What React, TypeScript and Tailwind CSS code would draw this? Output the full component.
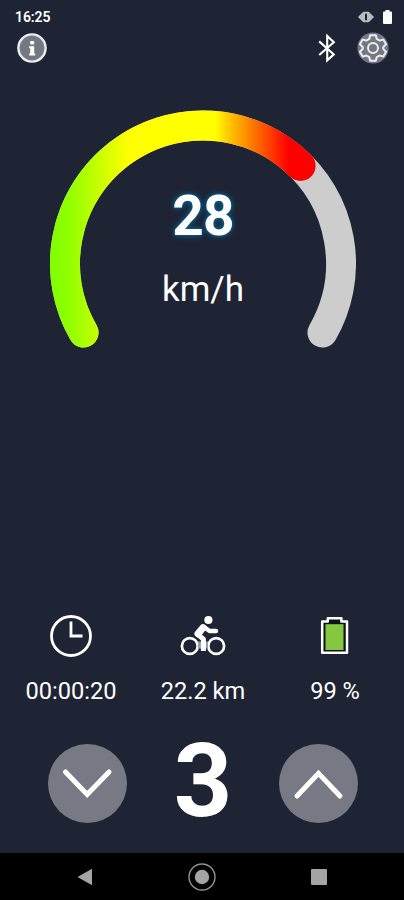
import type { ReactNode } from "react";

interface StatProps {
  icon: ReactNode;
  value: string;
}

function StatusBar() {
  return (
    <div className="flex h-8 items-center justify-between pt-0.5 pr-3 pl-[15px]">
      <span className="text-[14px] leading-none font-semibold tracking-[-0.1px]">16:25</span>
      <div className="flex items-center gap-[9px]">
        <svg width="16" height="12" viewBox="0 0 16 12">
          <path d="M0 6 4 2v8zM16 6l-4-4v8z" fill="#b9bbc1" />
          <rect x="4" y="0.8" width="8" height="10.4" rx="2" fill="#b9bbc1" />
          <rect x="7" y="2.4" width="2" height="7.2" rx="1" fill="#1f2433" />
        </svg>
        <svg width="9" height="14" viewBox="0 0 9 14">
          <path d="M2.5 0h4v1.5H8a1 1 0 0 1 1 1V13a1 1 0 0 1-1 1H1a1 1 0 0 1-1-1V2.5a1 1 0 0 1 1-1h1.5z" fill="#fff" />
        </svg>
      </div>
    </div>
  );
}

function InfoIcon() {
  return (
    <svg width="32" height="32" viewBox="0 0 32 32">
      <circle cx="16" cy="16" r="13.6" fill="#747885" stroke="#ececf1" strokeWidth="2.4" />
      <rect x="14.2" y="9" width="4" height="3.6" rx="0.8" fill="#fff" />
      <path d="M13.2 14.2h5v7.2h1v2h-6v-2h1v-5.200h-1z" fill="#fff" />
    </svg>
  );
}

function BluetoothIcon() {
  return (
    <svg width="20" height="32" viewBox="0 0 20 32" fill="none" stroke="#fff" strokeWidth="2.1">
      <path d="m2.2 9.400 14.600 13-6.600 6V4l6.600 6.200L2.200 23" />
    </svg>
  );
}

function GearIcon() {
  return (
    <svg width="32" height="32" viewBox="0 0 32 32" fill="none" stroke="#ededf0" strokeWidth="2" strokeLinejoin="round">
      <circle cx="16" cy="16" r="15.6" fill="#747884" stroke="none" />
      <path d="M13.200 3.200h5.600l.9 3.700 2.900 1.700 3.700-1.100 2.800 4.800-2.800 2.700v2.100l2.800 2.700-2.800 4.800-3.700-1.100-2.900 1.700-.9 3.600h-5.600l-.9-3.600-2.900-1.700-3.700 1.100-2.800-4.800L5.700 17v-2l-2.800-2.700 2.800-4.800 3.700 1.100 2.900-1.700z" />
      <circle cx="16" cy="16" r="5" />
    </svg>
  );
}

function Gauge() {
  return (
    <div className="relative h-[240px] w-[306px]">
      <svg width="306" height="240" viewBox="0 0 306 240" fill="none" strokeWidth="30" strokeLinecap="round">
        <defs>
          <linearGradient id="speed" gradientUnits="userSpaceOnUse" x1="0" y1="0" x2="306" y2="0">
            <stop offset="0" stopColor="#80ff00" />
            <stop offset="0.06" stopColor="#90ff00" />
            <stop offset="0.26" stopColor="#ffff00" />
            <stop offset="0.54" stopColor="#ffff00" />
            <stop offset="0.58" stopColor="#ffcc00" />
            <stop offset="0.78" stopColor="#ff0000" />
          </linearGradient>
        </defs>
        <path d="M33.500 222.500A138 138 0 1 1 272.500 222.500" stroke="#cdcdcd" />
        <path d="M33.500 222.500A138 138 0 0 1 250.600 55.900" stroke="url(#speed)" />
      </svg>
      <div className="absolute inset-x-0 top-[78px] flex flex-col items-center">
        <span className="text-[55px] leading-[57px] font-bold tracking-[-0.8px] [text-shadow:0_0_4px_#08699c,0_0_7px_#08547f]">28</span>
        <span className="mt-5 text-[35px] leading-[50px]">km/h</span>
      </div>
    </div>
  );
}

function ClockIcon() {
  return (
    <svg width="44" height="44" viewBox="0 0 44 44" fill="none" stroke="#fff" strokeWidth="2.8">
      <circle cx="22" cy="22" r="19.5" />
      <path d="M22 7.500v14.500h11.500" />
    </svg>
  );
}

function BikeIcon() {
  return (
    <svg width="46" height="44" viewBox="0 0 46 44" fill="none" stroke="#fff">
      <circle cx="9.800" cy="32" r="7.900" strokeWidth="2.700" />
      <circle cx="36.200" cy="32" r="7.900" strokeWidth="2.700" />
      <path d="M18 27.500h10v7H18z" fill="#9a9da7" stroke="none" />
      <circle cx="28.400" cy="6" r="4.100" fill="#fff" stroke="none" />
      {/* torso, arms, leg */}
      <g strokeLinejoin="round">
        <path d="m23 13.800-5 6" strokeWidth="7" strokeLinecap="round" />
        <path d="m24 13 5.500 4H36" strokeWidth="4.400" strokeLinecap="round" />
        <path d="m18 20.500 5.400 4.700V37" strokeWidth="5" />
      </g>
    </svg>
  );
}

function BatteryIcon() {
  return (
    <svg width="32" height="44" viewBox="0 0 32 44">
      <path d="M3.200 7.500h5.600V4.300h13.600v3.200H28v31.300H3.200z" fill="#10131e" stroke="#fff" strokeWidth="2.500" strokeLinejoin="round" />
      <path d="M10.500 7.500h10" stroke="#10131e" strokeWidth="3" />
      <rect x="6.500" y="10.200" width="18" height="25.800" fill="#84c83f" />
    </svg>
  );
}

function Stat({ icon, value }: StatProps) {
  return (
    <div className="flex flex-1 flex-col items-center">
      {icon}
      <span className="mt-[19px] text-[23.6px] leading-7 whitespace-nowrap">{value}</span>
    </div>
  );
}

function RoundButton({ label, path }: { label: string; path: string }) {
  return (
    <button aria-label={label} className="size-[79px] rounded-full bg-[#777a85]">
      <svg width="79" height="79" viewBox="0 0 79 79" fill="none" stroke="#fff" strokeWidth="5" strokeLinecap="round">
        <path d={path} />
      </svg>
    </button>
  );
}

function NavBar() {
  return (
    <div className="flex h-[47px] items-center justify-between bg-black pr-[77px] pl-[77px]">
      <svg width="16" height="18" viewBox="0 0 16 18">
        <path d="M.5 9 15 .8v16.400z" fill="#a4a4a4" />
      </svg>
      <svg width="28" height="28" viewBox="0 0 28 28">
        <circle cx="14" cy="14" r="13" fill="none" stroke="#929292" strokeWidth="1.400" />
        <circle cx="14" cy="14" r="7.200" fill="#a4a4a4" />
      </svg>
      <div className="size-4 rounded-[1px] bg-[#a4a4a4]" />
    </div>
  );
}

export default function App() {
  return (
    <div className="flex h-[900px] w-[404px] flex-col bg-[#1f2434] font-['Roboto',sans-serif] text-white">
      <StatusBar />
      <header className="flex h-8 items-center justify-between pr-[15px] pl-[15.5px]">
        <InfoIcon />
        <div className="flex items-center gap-[20px]">
          <BluetoothIcon />
          <GearIcon />
        </div>
      </header>
      <main className="flex flex-1 flex-col">
        <div className="flex justify-center pt-[46px] pl-0.5">
          <Gauge />
        </div>
        <div className="mt-[264px] flex pr-[3px] pl-[5px]">
          <Stat icon={<ClockIcon />} value="00:00:20" />
          <Stat icon={<BikeIcon />} value="22.2 km" />
          <Stat icon={<BatteryIcon />} value="99 %" />
        </div>
        <div className="mt-[24px] flex h-[108px] items-center justify-between pr-[46px] pl-[48px]">
          <RoundButton label="Decrease assist" path="M17.500 28 39.200 50.500 61 28" />
          <span className="pb-[5px] text-[102px] leading-none font-bold">3</span>
          <RoundButton label="Increase assist" path="M18 52 39.500 29.300 61 52" />
        </div>
      </main>
      <NavBar />
    </div>
  );
}
